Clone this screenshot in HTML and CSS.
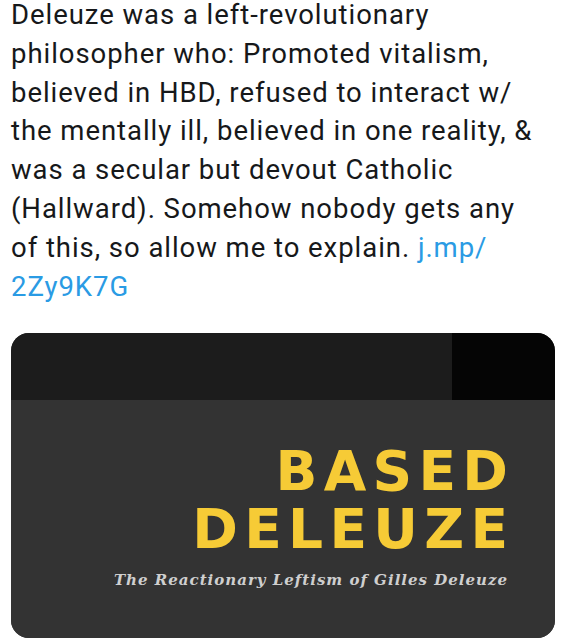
FILE: index.html
```html
<!DOCTYPE html>
<html>
<head>
<meta charset="utf-8">
<link rel="stylesheet" href="styles.css">
</head>
<body>
<div class="tweet">
  <p class="tweet-text">Deleuze was a left-revolutionary<br>philosopher who: Promoted vitalism,<br>believed in HBD, refused to interact w/<br>the mentally ill, believed in one reality, &amp;<br>was a secular but devout Catholic<br>(Hallward). Somehow nobody gets any<br>of this, so allow me to explain. <a class="link" href="#">j.mp/<br>2Zy9K7G</a></p>
  <div class="card">
    <div class="band">
      <div class="band-left"></div>
      <div class="band-right"></div>
    </div>
    <div class="cover">
      <div class="title">
        <div class="title-line">BASED</div>
        <div class="title-line">DELEUZE</div>
      </div>
      <div class="subtitle">The Reactionary Leftism of Gilles Deleuze</div>
    </div>
  </div>
</div>
</body>
</html>
```
FILE: styles.css
```css
html, body {
  margin: 0;
  padding: 0;
  background: #ffffff;
}
.tweet {
  width: 578px;
  height: 644px;
  overflow: hidden;
}
.tweet-text {
  margin: -4px 0 0 0;
  padding: 0 0 0 11px;
  font-family: Roboto, "Noto Sans", sans-serif;
  font-size: 27.5px;
  letter-spacing: 0.95px;
  line-height: 38.8px;
  color: #16181a;
  white-space: nowrap;
}
.link {
  color: #2a9be4;
  text-decoration: none;
}
.card {
  margin: 27px 23px 0 11px;
  height: 305px;
  border-radius: 18px;
  overflow: hidden;
  display: flex;
  flex-direction: column;
  background: #333333;
}
.band {
  height: 67px;
  display: flex;
}
.band-left {
  width: 441px;
  background: #1c1c1c;
}
.band-right {
  flex: 1;
  background: #050505;
}
.cover {
  flex: 1;
  background: #333333;
  display: flex;
  flex-direction: column;
  align-items: flex-end;
  padding: 42px 47px 0 0;
}
.title {
  display: flex;
  flex-direction: column;
  align-items: flex-end;
  font-family: "DejaVu Sans", "Open Sans", sans-serif;
  font-weight: 700;
  font-size: 55px;
  line-height: 58px;
  letter-spacing: 6.3px;
  color: #f6cb36;
}
.title-line {
  margin-right: -6.3px;
}
.subtitle {
  margin-top: 13px;
  font-family: "DejaVu Serif", "Liberation Serif", serif;
  font-style: italic;
  font-weight: 700;
  font-size: 15px;
  letter-spacing: 1px;
  color: #cfcfcf;
}
```
